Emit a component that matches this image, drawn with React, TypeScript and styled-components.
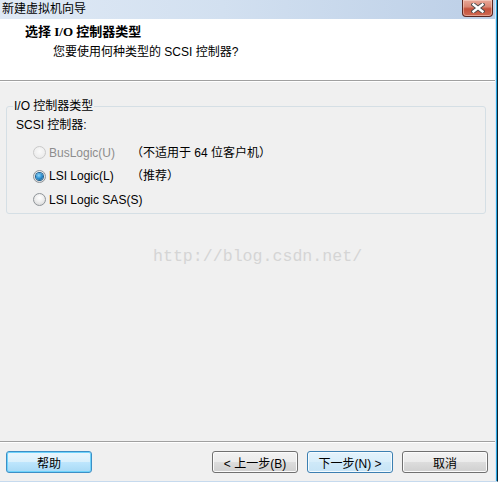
import React from "react";
import styled, { createGlobalStyle, css } from "styled-components";

const Global = createGlobalStyle`
  html, body { margin: 0; padding: 0; background: #f0f0f0; }
  body {
    font-family: "Liberation Sans", "Noto Sans CJK SC", sans-serif;
    font-size: 12px;
    color: #000;
  }
`;

const Frame = styled.div`
  width: 498px;
  height: 482px;
  box-sizing: border-box;
  display: flex;
  border-right: 1px solid #0c2230;
  border-bottom: 1px solid #c6daee;
`;

const Glow = styled.div`
  flex: 1;
  display: flex;
  min-width: 0;
  border-right: 1px solid #29a6e0;
`;

const Window = styled.div`
  flex: 1;
  min-width: 0;
  display: flex;
  flex-direction: column;
  background: #f0f0f0;
  border-right: 1px solid #d9e6f4;
`;

const TitleBar = styled.div`
  height: 19px;
  flex: none;
  display: flex;
  justify-content: space-between;
  align-items: flex-start;
  background: linear-gradient(to right, #dfe9f5 0%, #d2e0f0 45%, #bccfe7 100%);
`;

const TitleText = styled.div`
  padding-left: 2px;
  line-height: 19px;
  font-size: 12px;
  color: #000;
`;

const CloseButton = styled.div`
  width: 29px;
  height: 16px;
  margin-right: 2px;
  display: flex;
  align-items: center;
  justify-content: center;
  border: 1px solid #5a2621;
  border-top: none;
  border-radius: 0 0 4px 4px;
  background: linear-gradient(#e9a898 0%, #d98774 42%, #c4513b 55%, #cf6a53 100%);
  box-shadow: inset 0 0 0 1px rgba(255, 230, 220, 0.45);
`;

const Header = styled.div`
  height: 56px;
  flex: none;
  background: #fff;
  border-bottom: 1px solid #a0a0a0;
  padding: 5px 0 0 25px;
  box-sizing: content-box;
`;

const HeaderTitle = styled.div`
  font-family: "Liberation Serif", "Noto Sans CJK SC", serif;
  font-weight: bold;
  font-size: 13px;
  line-height: 16px;
`;

const HeaderSub = styled.div`
  margin: 4px 0 0 28px;
  font-size: 12px;
  line-height: 16px;
`;

const Body = styled.div`
  flex: 1;
  position: relative;
  border-top: 1px solid #fff;
  padding: 16px 9px 0 6px;
`;

const Group = styled.fieldset`
  margin: 0;
  min-width: 0;
  border: 1px solid #d5dfe5;
  border-radius: 3px;
  padding: 3px 6px 1px 6px;
`;

const Legend = styled.legend`
  padding: 0 1px;
  line-height: 16px;
  font-size: 12px;
`;

const FieldLabel = styled.div`
  padding-left: 3px;
  line-height: 16px;
`;

const OptionGrid = styled.div`
  margin-top: 8px;
  padding-left: 20px;
  display: grid;
  grid-template-columns: 98px auto;
  grid-auto-rows: 23.5px;
  align-items: center;
`;

const Option = styled.label<{ $disabled?: boolean }>`
  display: flex;
  align-items: center;
  gap: 3px;
  white-space: nowrap;
  color: ${(p) => (p.$disabled ? "#8d8d8d" : "#000")};
  line-height: 16px;
`;

const Radio = styled.span<{ $checked?: boolean; $disabled?: boolean }>`
  flex: none;
  width: 13px;
  height: 13px;
  box-sizing: border-box;
  border-radius: 50%;
  display: flex;
  align-items: center;
  justify-content: center;
  border: 1px solid ${(p) => (p.$disabled ? "#c9c9c9" : "#8f9499")};
  background: ${(p) =>
    p.$disabled
      ? "radial-gradient(circle at 50% 40%, #fafafa, #e6e6e6)"
      : "radial-gradient(circle at 50% 35%, #ffffff 0%, #eeeeee 45%, #d0d0d0 100%)"};

  ${(p) =>
    p.$checked &&
    css`
      &::after {
        content: "";
        width: 7px;
        height: 7px;
        border-radius: 50%;
        background: radial-gradient(circle at 40% 35%, #8fd8fb 0%, #2a8ed0 50%, #0b4a7a 100%);
        box-shadow: 0 0 0 1px #1e5f8e;
      }
    `}
`;

const Note = styled.span`
  line-height: 16px;
  white-space: nowrap;
`;

const Watermark = styled.div`
  position: absolute;
  left: 153px;
  top: 166px;
  font-family: "Liberation Mono", monospace;
  font-size: 16.6px;
  line-height: 18px;
  color: #d5d5d5;
  pointer-events: none;
`;

const Footer = styled.div`
  flex: none;
  display: flex;
  align-items: center;
  gap: 9px;
  border-top: 1px solid #a0a0a0;
  box-shadow: inset 0 1px 0 #ffffff;
  padding: 9px 7px 8px 6px;
`;

const Spacer = styled.div`
  flex: 1;
`;

type Variant = "normal" | "focus" | "default";

const Button = styled.button<{ $variant?: Variant }>`
  width: 86px;
  height: 22px;
  box-sizing: border-box;
  padding: 0;
  font-family: "Liberation Sans", "Noto Sans CJK SC", sans-serif;
  font-size: 12px;
  color: #000;
  border-radius: 3px;
  border: 1px solid #707070;
  background: linear-gradient(#f2f2f2 0%, #ebebeb 50%, #dddddd 51%, #cfcfcf 100%);
  box-shadow: inset 0 0 0 1px #fbfbfb;

  ${(p) =>
    p.$variant === "focus" &&
    css`
      border-color: #3c8fc6;
      background: linear-gradient(#eaf6fd 0%, #d9f0fc 50%, #bee6fd 51%, #a7d9f5 100%);
      box-shadow: inset 0 0 0 1px #6fd3fb;
    `}

  ${(p) =>
    p.$variant === "default" &&
    css`
      border-color: #3c7fb1;
      background: linear-gradient(#e4f3fc 0%, #d8eefa 50%, #cfe9f8 51%, #c6e4f6 100%);
      box-shadow: inset 0 0 0 1px #f4fbff;
    `}
`;

const CloseIcon = () => (
  <svg width="14" height="10" viewBox="0 0 14 10">
    <path d="M2.5 1.5 L11.5 8.5 M11.5 1.5 L2.5 8.5" stroke="#4a4a4a" strokeWidth="4.2" strokeLinecap="square" fill="none" />
    <path d="M2.5 1.5 L11.5 8.5 M11.5 1.5 L2.5 8.5" stroke="#ffffff" strokeWidth="2.4" strokeLinecap="square" fill="none" />
  </svg>
);

export default function App() {
  return (
    <>
      <Global />
      <Frame>
        <Glow>
          <Window>
            <TitleBar>
              <TitleText>新建虚拟机向导</TitleText>
              <CloseButton>
                <CloseIcon />
              </CloseButton>
            </TitleBar>
            <Header>
              <HeaderTitle>选择 I/O 控制器类型</HeaderTitle>
              <HeaderSub>您要使用何种类型的 SCSI 控制器?</HeaderSub>
            </Header>
            <Body>
              <Group>
                <Legend>I/O 控制器类型</Legend>
                <FieldLabel>SCSI 控制器:</FieldLabel>
                <OptionGrid>
                  <Option $disabled>
                    <Radio $disabled />
                    BusLogic(U)
                  </Option>
                  <Note>（不适用于 64 位客户机）</Note>
                  <Option>
                    <Radio $checked />
                    LSI Logic(L)
                  </Option>
                  <Note>（推荐）</Note>
                  <Option>
                    <Radio />
                    LSI Logic SAS(S)
                  </Option>
                </OptionGrid>
              </Group>
              <Watermark>http://blog.csdn.net/</Watermark>
            </Body>
            <Footer>
              <Button $variant="focus">帮助</Button>
              <Spacer />
              <Button>&lt; 上一步(B)</Button>
              <Button $variant="default">下一步(N) &gt;</Button>
              <Button>取消</Button>
            </Footer>
          </Window>
        </Glow>
      </Frame>
    </>
  );
}
